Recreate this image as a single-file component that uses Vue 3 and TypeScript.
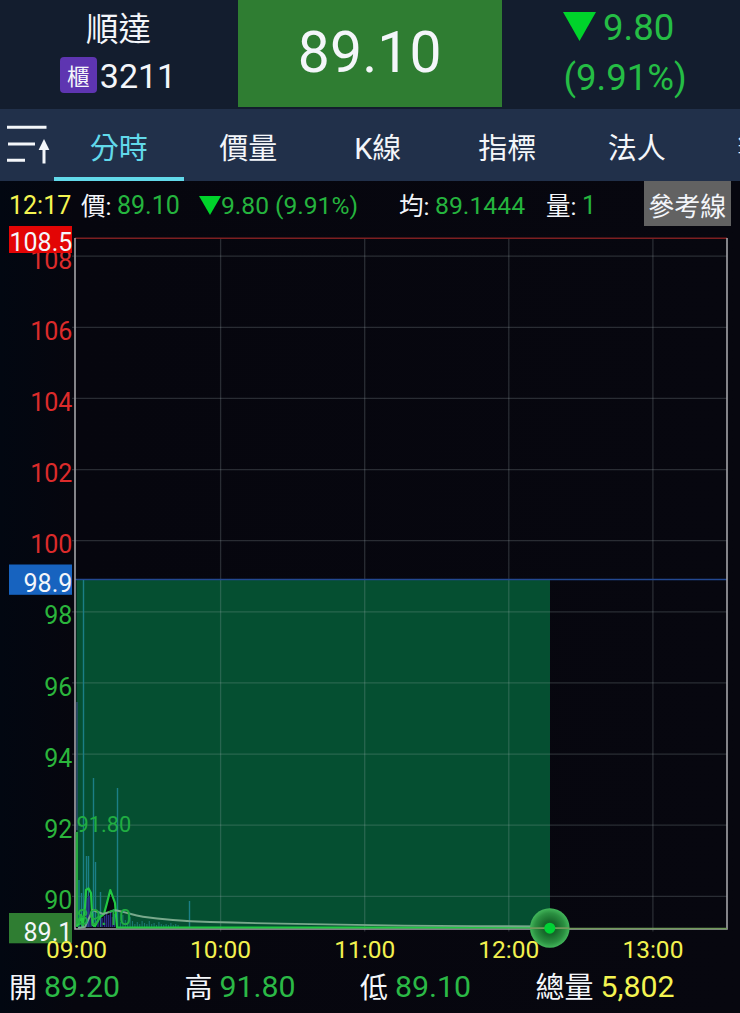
<script setup lang="ts">
const tabs: string[] = ['分時', '價量', 'K線', '指標', '法人', '籌碼']

const left = 75
const right = 727
const top = 238
const bottom = 928.5

const priceLevels = [108, 106, 104, 102, 100, 98, 96, 94, 92, 90].map((price, i) => ({
  price,
  y: 256.2 + i * 71.12,
  up: price > 98.9,
}))

const hours = ['09:00', '10:00', '11:00', '12:00', '13:00'].map((label, i) => ({
  label,
  x: 76.5 + i * 144.1,
}))

const priceTrail =
  '76.5,926 79,924 81,915 83,926 85,907 86,890 88.5,888.5 91,893 92.5,925 95,926 100,917 104,914 107,903 110.3,890 115,903 117,927.5 550,927.5'

interface Bar { x: number; y: number }
const tallBars: Bar[] = [
  { x: 83.5, y: 580 },
  { x: 93.5, y: 778 },
  { x: 117.5, y: 788 },
  { x: 86.5, y: 856 },
  { x: 88.5, y: 856 },
  { x: 95.5, y: 862 },
  { x: 79, y: 880 },
  { x: 81.5, y: 893 },
  { x: 100.5, y: 892 },
  { x: 189.5, y: 901 },
]
const innerBars: Bar[] = [
  { x: 87, y: 898 }, { x: 89, y: 896 }, { x: 91, y: 912 }, { x: 98, y: 920 },
  { x: 102, y: 918 }, { x: 104.5, y: 916 }, { x: 106.5, y: 913 }, { x: 108.5, y: 915 },
  { x: 110.5, y: 911 }, { x: 112.5, y: 917 }, { x: 114.5, y: 914 },
]
const smallBars: Bar[] = [
  5, 12, 7, 4, 10, 6, 3, 5, 3, 6, 4, 3, 6, 3, 4, 2, 5, 3, 2, 3, 2, 4, 2, 3, 2,
].map((h, i) => ({ x: 120.5 + i * 2.4, y: 927 - h }))
</script>

<template>
  <main class="screen">
    <header class="quote">
      <div class="stock">
        <div class="name">順達</div>
        <div class="code"><span class="badge">櫃</span><span>3211</span></div>
      </div>
      <div class="last">89.10</div>
      <div class="change">
        <div class="diff">
          <svg class="down" viewBox="0 0 33 29"><path d="M0 0H33L16.5 29Z" /></svg>
          <span>9.80</span>
        </div>
        <div class="pct">(9.91%)</div>
      </div>
    </header>

    <nav class="tabs">
      <svg class="menu" viewBox="0 0 54 73">
        <path d="M7 18.3H46.5M8 35H35M7 51.3H25" />
        <path d="M44 54.5V40" />
        <path class="tip" d="M44 30L49.4 41H38.6Z" />
      </svg>
      <span v-for="(tab, i) in tabs" :key="tab" class="tab" :class="{ active: i === 0 }">{{ tab }}</span>
    </nav>

    <section class="info">
      <span class="time">12:17</span>
      <span class="label">價:</span>
      <span class="num price">89.10</span>
      <svg class="down-small" viewBox="0 0 22 19"><path d="M0 0H22L11 19Z" /></svg>
      <span class="num delta">9.80 (9.91%)</span>
      <span class="label">均:</span>
      <span class="num avg">89.1444</span>
      <span class="label">量:</span>
      <span class="num vol">1</span>
      <span class="ref">參考線</span>
    </section>

    <svg class="chart" viewBox="0 226 740 741">
      <defs>
        <radialGradient id="pulse">
          <stop offset="0" stop-color="#0b5a1c" />
          <stop offset="0.35" stop-color="#17682b" />
          <stop offset="0.75" stop-color="#2b9041" />
          <stop offset="1" stop-color="#43b75b" />
        </radialGradient>
      </defs>
      <polygon class="area" :points="`76.5,579.5 ${priceTrail} 550,579.5`" />
      <g class="grid">
        <line v-for="p in priceLevels" :key="p.price" :x1="left - 3" :x2="right" :y1="p.y" :y2="p.y" />
        <line v-for="h in hours.slice(1)" :key="h.label" :x1="h.x" :x2="h.x" :y1="top" :y2="bottom + 3" />
      </g>
      <line class="limit" :x1="left" :x2="right" y1="238.2" y2="238.2" />
      <line class="base" :x1="left" :x2="right" y1="579.5" y2="579.5" />
      <g class="vol-bars">
        <line v-for="(b, i) in tallBars" :key="i" :x1="b.x" :x2="b.x" :y1="b.y" y2="927" />
      </g>
      <g class="vol-small">
        <line v-for="(b, i) in smallBars" :key="i" :x1="b.x" :x2="b.x" :y1="b.y" y2="927" />
      </g>
      <g class="vol-inner">
        <line v-for="(b, i) in innerBars" :key="i" :x1="b.x" :x2="b.x" :y1="b.y" y2="927" />
      </g>
      <line class="open-vol" x1="77" x2="77" y1="702" y2="830" />
      <path class="frame" :d="`M${left} ${top}V${bottom + 0.5}H${right}V${top}`" />
      <line class="open-price" x1="76.8" x2="76.8" y1="832" y2="927" />
      <polyline class="price-line" :points="priceTrail" />
      <path class="avg-line" d="M78 928L85 927L92.7 910L103 914L115 910.3C126 912 132 915 143 916.7C160 919.3 178 921 210 922C300 924.5 420 926 550 926.5" />
      <text class="mark" x="76.5" y="832.2">91.80</text>
      <text class="mark" x="76.5" y="925.2">89.10</text>
      <line class="after" x1="550" :x2="right" y1="928.5" y2="928.5" />
      <circle cx="549.8" cy="928" r="19.8" fill="url(#pulse)" />
      <line class="after" x1="530" x2="569" y1="928.2" y2="928.2" />
      <circle class="dot" cx="549.8" cy="928.2" r="5.5" />

      <text v-for="p in priceLevels" :key="p.price" class="axis" :class="{ up: p.up }" x="72.3" :y="p.y + 12.6">{{ p.price }}</text>
      <rect class="tag-high" x="9" y="226" width="63" height="27" />
      <text class="axis tag" x="72.3" y="250.6">108.5</text>
      <rect class="tag-base" x="9" y="564.5" width="63" height="30.3" />
      <text class="axis tag" x="72.3" y="592">98.9</text>
      <rect class="tag-low" x="9" y="913" width="63" height="30.3" />
      <text class="axis tag" x="72.3" y="940.6">89.1</text>
      <text v-for="h in hours" :key="h.label" class="hour" :x="h.x" y="957.9">{{ h.label }}</text>
    </svg>

    <footer class="summary">
      <div class="cell"><span>開</span><b>89.20</b></div>
      <div class="cell"><span>高</span><b>91.80</b></div>
      <div class="cell"><span>低</span><b>89.10</b></div>
      <div class="cell total"><span>總量</span><b>5,802</b></div>
    </footer>
  </main>
</template>

<style>
body {
  background: #06070f;
  overflow: hidden;
}
</style>

<style scoped>
.screen {
  width: 740px;
  height: 1013px;
  overflow: hidden;
  background: linear-gradient(90deg, #020711 0, #06060e 75px, #07070f 100%);
  color: #f4f6fa;
  font-family: Roboto, "Noto Sans CJK TC", sans-serif;
}
.quote {
  display: grid;
  grid-template-columns: 238px 263.5px 238.5px;
  height: 108.5px;
  background: #131d2e;
}
.stock {
  display: flex;
  flex-direction: column;
  align-items: center;
}
.name {
  font-size: 32.5px;
  line-height: 38px;
  margin: 11px 1px 0 0;
}
.code {
  display: flex;
  gap: 3px;
  margin: 8px 2px 0 0;
  font-size: 34px;
  line-height: 39px;
}
.badge {
  width: 37px;
  height: 36px;
  border-radius: 4px;
  background: #5e35b1;
  font-size: 22.5px;
  line-height: 40px;
  text-align: center;
}
.last {
  height: 107px;
  background: #2f7d32;
  font-size: 57px;
  line-height: 106px;
  letter-spacing: 0.2px;
  text-align: center;
}
.change {
  color: #25bd45;
  font-size: 36.5px;
}
.diff {
  display: flex;
  margin: 7px 0 0 61.5px;
  gap: 7px;
  line-height: 41px;
}
.down {
  width: 33px;
  height: 29px;
  margin-top: 5px;
  fill: #00d32b;
}
.pct {
  margin: 9px 0 0 62px;
  line-height: 41px;
}
.tabs {
  display: flex;
  width: 840px;
  height: 72.5px;
  background: #21304a;
}
.menu {
  width: 54px;
  height: 73px;
  fill: none;
  stroke: #f4f6fa;
  stroke-width: 3;
}
.menu .tip {
  fill: #f4f6fa;
  stroke: none;
}
.tab {
  width: 129.5px;
  height: 72px;
  box-sizing: border-box;
  border-bottom: 4px solid transparent;
  text-align: center;
  font-size: 29px;
  line-height: 80px;
}
.tab.active {
  color: #62d9ea;
  border-color: #62d9ea;
}
.info {
  display: flex;
  height: 45px;
  font-size: 25px;
  line-height: 49px;
  white-space: nowrap;
}
.time {
  width: 73px;
  padding-left: 9px;
  box-sizing: border-box;
  color: #f4f451;
}
.label {
  width: 36px;
  margin-left: 8px;
  font-size: 24.5px;
  line-height: 51px;
}
.num {
  color: #25b43e;
}
.price {
  width: 82px;
}
.down-small {
  width: 22px;
  height: 19px;
  margin-top: 15px;
  fill: #00d32b;
}
.delta {
  width: 170px;
  font-size: 24.6px;
}
.avg {
  width: 103px;
  font-size: 24.8px;
}
.vol {
  width: 62px;
}
.ref {
  width: 86.5px;
  height: 44.5px;
  background: #626262;
  font-size: 26px;
  line-height: 52px;
  text-align: center;
}
.chart {
  display: block;
  width: 740px;
  height: 741px;
}
.area { fill: #054f31; }
.grid line {
  stroke: #a8b4bc;
  stroke-opacity: 0.22;
  stroke-width: 1.3;
}
.limit { stroke: #7d1f21; stroke-width: 1.4; }
.base { stroke: #234891; stroke-width: 1.3; }
.vol-bars line { stroke: #1b7f86; stroke-width: 1.4; }
.vol-small line { stroke: #1b7771; stroke-width: 1.1; }
.vol-inner line { stroke: #2d2d87; stroke-width: 1.5; }
.open-vol { stroke: #314d72; stroke-width: 1.5; }
.frame { fill: none; stroke: #a3a3a8; stroke-width: 1.6; }
.open-price { stroke: #25a83e; stroke-width: 2.4; }
.price-line {
  fill: none;
  stroke: #22c843;
  stroke-width: 2.2;
  stroke-linejoin: round;
}
.avg-line { fill: none; stroke: #79a98c; stroke-width: 1.9; }
.mark { fill: #20ad42; font-size: 21.8px; }
.after { stroke: #729a5b; stroke-width: 1.7; }
.dot { fill: #00d335; }
.axis {
  fill: #2bb53c;
  font-size: 25px;
  text-anchor: end;
}
.axis.up { fill: #dc2b2b; }
.axis.tag { fill: #f4f6fa; }
.tag-high { fill: #e30505; }
.tag-base { fill: #1763bf; }
.tag-low { fill: #2f7d32; }
.hour {
  fill: #f2f14e;
  font-size: 24.5px;
  text-anchor: middle;
}
.summary {
  display: flex;
  height: 46px;
  padding-left: 9px;
  line-height: 40px;
}
.cell {
  display: flex;
  width: 175.5px;
  gap: 7px;
  font-size: 28px;
}
.cell span {
  line-height: 43px;
}
.cell b {
  font-weight: 400;
  font-size: 30.3px;
  color: #2bb946;
}
.cell.total { font-size: 29px; }
.cell.total b { color: #f4f451; }
</style>
